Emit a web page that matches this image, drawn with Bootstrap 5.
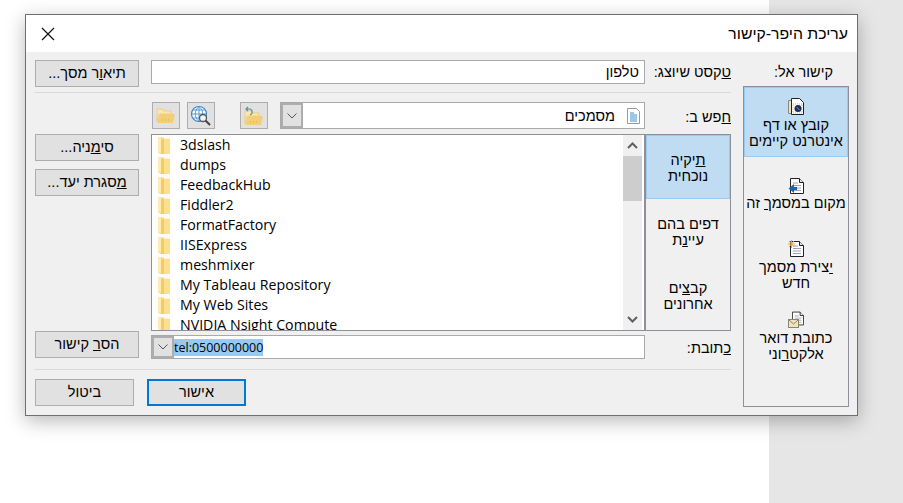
<!DOCTYPE html>
<html lang="he">

<head>
    <meta charset="UTF-8">
    <title>עריכת היפר-קישור</title>
    <link href="https://cdn.jsdelivr.net/npm/bootstrap@5.3.0/dist/css/bootstrap.min.css" rel="stylesheet">
    <style>
        html, body {
            height: 100%;
            overflow: hidden;
        }

        body {
            background: #fff;
            color: #000;
            font-family: "Liberation Sans", sans-serif;
            font-size: 14.5px;
            line-height: 16px;
        }

        .side-strip {
            position: absolute;
            top: 0;
            right: 0;
            bottom: 0;
            width: 134px;
            background: #e6e6e6;
        }

        .link-dialog {
            position: absolute;
            left: 25px;
            top: 14px;
            width: 833px;
            height: 402px;
            background: #f0f0f0;
            border: 1px solid #6f6f6f;
            box-shadow: 0 5px 18px rgba(0, 0, 0, .28);
        }

        .dlg-title {
            height: 37px;
            background: #fff;
            padding: 0 9px 0 15px;
            font-size: 15.8px;
        }

        .dlg-body {
            padding: 0 8px 0 0;
        }

        .link-side {
            width: 106px;
            flex: none;
        }

        .side-label {
            height: 34px;
            padding: 12px 16px 0 0;
        }

        .side-list {
            height: 321px;
            border: 1px solid #8f8f9b;
            border-radius: 0;
            background: #f0f0f0;
        }

        .side-item {
            height: 70px;
            padding: 10px 0 0;
            margin-bottom: 10px;
            background: transparent;
            border: 1px solid transparent;
            border-radius: 0;
            text-align: center;
            color: #000;
        }

        .side-item + .side-item {
            border-top-width: 1px;
        }

        .side-item.is-on,
        .place-item.is-on {
            background: #bfdcf3;
            border-color: #99cbf1;
        }

        .side-item.one-line {
            height: 52px;
        }

        .side-item.tight {
            height: 61px;
        }

        .side-item svg {
            display: block;
            margin: 0 auto 2px;
        }

        .side-item.one-line svg {
            margin-bottom: 0;
        }

        .link-main {
            width: 696px;
            margin-right: 12px;
            flex: none;
        }

        .field-row {
            display: flex;
        }

        .field-label {
            width: 86px;
            flex: none;
            padding-top: 4px;
        }

        .label-look {
            padding-top: 7px;
        }

        .label-addr {
            padding-top: 9px;
        }

        .field-mid {
            width: 494px;
            flex: none;
        }

        .flat-input {
            height: 24px;
            padding: 0 5px;
            background: #fff;
            border: 1px solid #a9a9a9;
            border-radius: 0;
            color: #000;
            font-size: 14.5px;
            line-height: 20px;
            box-shadow: none;
        }

        .flat-btn {
            width: 104px;
            height: 27px;
            padding: 0;
            background: #e1e1e1;
            border: 1px solid #adadad;
            border-radius: 0;
            color: #000;
            font-size: 14.5px;
            line-height: 23px;
        }

        .flat-btn:hover {
            background: #e1e1e1;
            border-color: #adadad;
            color: #000;
        }

        .flat-btn.is-default {
            border: 2px solid #0078d7;
        }

        .btn-short {
            width: 99px;
        }

        .tool-btn {
            width: 28px;
            height: 27px;
            padding: 0;
            display: flex;
            align-items: center;
            justify-content: center;
        }

        .hair {
            height: 1px;
            background: #d9d9d9;
            margin: 0 0 0 -1px;
        }

        .combo {
            height: 27px;
            background: #fff;
            border: 1px solid #a9a9a9;
        }

        .combo-arrow {
            width: 22px;
            flex: none;
            align-self: stretch;
            background: #e1e1e1;
            border: 2px solid #adadad;
            display: flex;
            align-items: center;
            justify-content: center;
        }

        .places {
            width: 86px;
            height: 197px;
            flex: none;
            border: 1px solid #8f8f9b;
            border-radius: 0;
            background: #f0f0f0;
        }

        .place-item {
            height: 64px;
            border: 1px solid transparent;
            text-align: center;
            color: #000;
            padding: 16px 0 0;
            background: transparent;
            border-radius: 0;
        }

        .place-item + .place-item {
            border-top-width: 1px;
        }

        .file-box {
            width: 494px;
            height: 197px;
            flex: none;
            background: #fff;
            border: 1px solid #8f8f9b;
            overflow: hidden;
        }

        .file-rows {
            direction: ltr;
            flex: 1;
            padding: 0;
            margin: 0;
            overflow: hidden;
            list-style: none;
            font-family: "Open Sans", "Liberation Sans", sans-serif;
            font-size: 14.2px;
        }

        .file-rows li {
            height: 20px;
            display: flex;
            align-items: center;
            padding-left: 6px;
            white-space: nowrap;
        }

        .file-rows svg {
            margin-right: 10px;
            flex: none;
        }

        .scroll-bar {
            width: 19px;
            flex: none;
            background: #f0f0f0;
            margin-right: 2px;
        }

        .scroll-end {
            height: 21px;
            display: flex;
            align-items: center;
            justify-content: center;
        }

        .scroll-thumb {
            height: 45px;
            background: #cdcdcd;
        }

        .addr-sel {
            direction: ltr;
            background: #99c9ef;
            font-family: "Open Sans", "Liberation Sans", sans-serif;
            font-size: 12.5px;
            line-height: 17px;
            padding: 0;
        }
    </style>
</head>

<body>

    <!-- symbols -->
    <svg width="0" height="0" class="d-none">
        <defs>
            <symbol id="ic-folder" viewBox="0 0 12 17">
                <path d="M0 0h5l1 1.500h6V17H2L0 15.500z" fill="#fbe08f"/>
                <path d="M0 0h3v15.500H0z" fill="#fdeab4"/>
                <path d="M3 2l3-.500V17H3z" fill="#f5cb62"/>
            </symbol>
            <symbol id="ic-open" viewBox="0 0 20 17">
                <path d="M1 2h6l1 2h7v3H3L1 14z" fill="#fbe7ae" stroke="#e8c56f" stroke-width=".7"/>
                <path d="M4 7h15l-2 9H1z" fill="#f4cd78"/>
                <path d="M6 13h1M9 13h1M12 13h1" stroke="#d9ad55"/>
            </symbol>
            <symbol id="ic-down" viewBox="0 0 10 6">
                <path d="M.5.5 5 5 9.500.5" fill="none" stroke="#555" stroke-width="1"/>
            </symbol>
            <symbol id="ic-page" viewBox="0 0 14 16">
                <path d="M.5.5h9l4 4v11H.5z" fill="#fff" stroke="#222"/>
                <path d="M9.500.5v4h4" fill="#e8e8e8" stroke="#222"/>
                <path d="M3 5h5M3 7.500h8M3 10h8M3 12.500h8" stroke="#98a4b4"/>
            </symbol>
        </defs>
    </svg>

    <div class="side-strip"></div>

    <div class="link-dialog d-flex flex-column" dir="rtl">
        <div class="dlg-title d-flex align-items-center justify-content-between">
            <span>עריכת היפר-קישור</span>
            <svg width="14" height="14" viewBox="0 0 14 14">
                <path d="M1 1l12 12M13 1 1 13" stroke="#111" stroke-width="1.2" fill="none"/>
            </svg>
        </div>

        <div class="dlg-body d-flex flex-grow-1">
            <div class="link-side">
                <div class="side-label">קישור אל:</div>
                <div class="list-group side-list">
                    <a class="list-group-item side-item is-on">
                        <svg width="16" height="17" viewBox="0 0 16 17">
                            <path d="M.5 2.500h8v13h-8z" fill="#e9e2c6" stroke="#8a8a7a"/>
                            <path d="M3.500.5h8l4 4v12h-12z" fill="#fff" stroke="#222"/>
                            <rect x="5" y="6" width="9" height="9" fill="none" stroke="#f0b060" stroke-dasharray="1 1"/>
                            <circle cx="10" cy="10.500" r="3.500" fill="#1c2f5c"/>
                            <path d="M8.500 9l3 3" stroke="#6fa8dc"/>
                        </svg>
                        קובץ או דף<br>אינטרנט קיימים
                    </a>
                    <a class="list-group-item side-item one-line">
                        <svg width="16" height="17" viewBox="0 0 16 17">
                            <use href="#ic-page" width="14" height="16" x="2" y="0"/>
                            <path d="M6 6 .5 10.500 6 15v-3h3V9H6z" fill="#1b63b5"/>
                        </svg>
                        מקום במסמ<u>ך</u> זה
                    </a>
                    <a class="list-group-item side-item tight">
                        <svg width="16" height="17" viewBox="0 0 16 17">
                            <use href="#ic-page" width="14" height="16" x="2" y="1"/>
                            <path d="M3.500 0v8M0 4h7M1 1l5 6M6 1 1 7" stroke="#e9a93a"/>
                        </svg>
                        <u>י</u>צירת מסמך<br>חדש
                    </a>
                    <a class="list-group-item side-item">
                        <svg width="16" height="17" viewBox="0 0 16 17">
                            <use href="#ic-page" width="12" height="15" x="4" y="0"/>
                            <rect x=".5" y="8.500" width="10" height="8" fill="#efe3c0" stroke="#8d8468"/>
                            <path d="M1 9l4.500 4L10 9" fill="none" stroke="#8d8468"/>
                        </svg>
                        כתובת דואר<br>אלקט<u>ר</u>וני
                    </a>
                </div>
            </div>

            <div class="link-main d-flex flex-column">
                <!-- shown text -->
                <div class="field-row pt-2">
                    <div class="field-label"><u>ט</u>קסט שיוצג:</div>
                    <input class="form-control flat-input field-mid" value="טלפון">
                    <div class="flex-grow-1 d-flex justify-content-end">
                        <button class="btn flat-btn" type="button">תיא<u>ו</u>ר מסך...</button>
                    </div>
                </div>
                <div class="hair" style="margin-top:5px;margin-bottom:9px"></div>

                <!-- look in -->
                <div class="field-row">
                    <div class="field-label label-look"><u>ח</u>פש ב:</div>
                    <div class="field-mid d-flex gap-0">
                        <div class="combo d-flex align-items-center" style="width:365px">
                            <svg class="mx-1" width="13" height="16" viewBox="0 0 13 16">
                                <path d="M.5.5h9l3 3v12H.5z" fill="#fff" stroke="#9a9a9a"/>
                                <path d="M3 5h4M3 7h7M3 9h7M3 11h7M3 13h7" stroke="#3b8fd1"/>
                            </svg>
                            <span class="flex-grow-1 ps-1 pe-2">מסמכים</span>
                            <span class="combo-arrow"><svg width="10" height="6"><use href="#ic-down"/></svg></span>
                        </div>
                        <button class="btn flat-btn tool-btn" type="button" style="margin-right:12px">
                            <svg width="20" height="20">
                                <use href="#ic-open" y="3" width="20" height="17"/>
                                <path d="M6 9c3-1 3-5 0-6H2M4 1 2 3l2 2" fill="none" stroke="#5a8f9c" stroke-width="1.200"/>
                            </svg>
                        </button>
                        <button class="btn flat-btn tool-btn" type="button" style="margin-right:25px">
                            <svg width="22" height="22" viewBox="0 0 22 22">
                                <circle cx="9" cy="9" r="7.500" fill="#fff" stroke="#3a87c8" stroke-width="1.200"/>
                                <path d="M1.500 9h15M9 1.500v15M3 5h12M3 13h12M9 1.500c-5 4-5 11 0 15M9 1.500c5 4 5 11 0 15" fill="none" stroke="#3a87c8" stroke-width=".8"/>
                                <circle cx="13" cy="13" r="3.500" fill="#eef3f6" stroke="#555" stroke-width="1.300"/>
                                <path d="M15.500 15.500 20 20" stroke="#444" stroke-width="2"/>
                            </svg>
                        </button>
                        <button class="btn flat-btn tool-btn" type="button" style="margin-right:7px">
                            <svg width="20" height="17"><use href="#ic-open"/></svg>
                        </button>
                    </div>
                </div>

                <!-- places + files -->
                <div class="field-row" style="margin-top:5px">
                    <div class="list-group places">
                        <a class="list-group-item place-item is-on"><u>ת</u>יקיה<br>נוכחית</a>
                        <a class="list-group-item place-item">דפים בהם<br>עיי<u>נ</u>ת</a>
                        <a class="list-group-item place-item">קב<u>צ</u>ים<br>אחרונים</a>
                    </div>
                    <div class="file-box d-flex">
                        <div class="scroll-bar d-flex flex-column">
                            <div class="scroll-end"><svg width="11" height="7" viewBox="0 0 11 7"><path d="M1 6l4.500-4.500L10 6" fill="none" stroke="#606060" stroke-width="2"/></svg></div>
                            <div class="scroll-thumb"></div>
                            <div class="scroll-end mt-auto"><svg width="11" height="7" viewBox="0 0 11 7"><path d="M1 1l4.500 4.500L10 1" fill="none" stroke="#606060" stroke-width="2"/></svg></div>
                        </div>
                        <ul class="file-rows" id="fileRows"></ul>
                    </div>
                    <div class="flex-grow-1 d-flex flex-column align-items-end gap-2">
                        <button class="btn flat-btn" type="button">סי<u>מ</u>ניה...</button>
                        <button class="btn flat-btn" type="button"><u>מ</u>סגרת יעד...</button>
                    </div>
                </div>

                <!-- address -->
                <div class="field-row">
                    <div class="field-label label-addr"><u>כ</u>תובת:</div>
                    <div class="field-mid pt-1">
                        <div class="combo d-flex align-items-center" style="height:24px">
                            <span class="flex-grow-1 d-flex justify-content-end"><span class="addr-sel">tel:0500000000</span></span>
                            <span class="combo-arrow"><svg width="10" height="6"><use href="#ic-down"/></svg></span>
                        </div>
                    </div>
                    <div class="flex-grow-1 d-flex justify-content-end">
                        <button class="btn flat-btn" type="button">הס<u>ר</u> קישור</button>
                    </div>
                </div>
                <div class="hair" style="margin-top:10px;margin-bottom:9px"></div>

                <!-- dialog buttons -->
                <div class="d-flex justify-content-end gap-2">
                    <button class="btn flat-btn btn-short is-default" type="button">אישור</button>
                    <button class="btn flat-btn btn-short" type="button" style="margin-right:5px">ביטול</button>
                </div>
            </div>
        </div>
    </div>

    <script>
        const folders = ['3dslash', 'dumps', 'FeedbackHub', 'Fiddler2', 'FormatFactory', 'IISExpress',
            'meshmixer', 'My Tableau Repository', 'My Web Sites', 'NVIDIA Nsight Compute'];
        const fileRows = document.getElementById('fileRows');
        folders.forEach(name => {
            const li = document.createElement('li');
            li.innerHTML = '<svg width="12" height="17"><use href="#ic-folder"/></svg>' + name;
            fileRows.appendChild(li);
        });
    </script>
    <script src="https://cdn.jsdelivr.net/npm/bootstrap@5.3.0/dist/js/bootstrap.bundle.min.js"></script>

</body>

</html>
